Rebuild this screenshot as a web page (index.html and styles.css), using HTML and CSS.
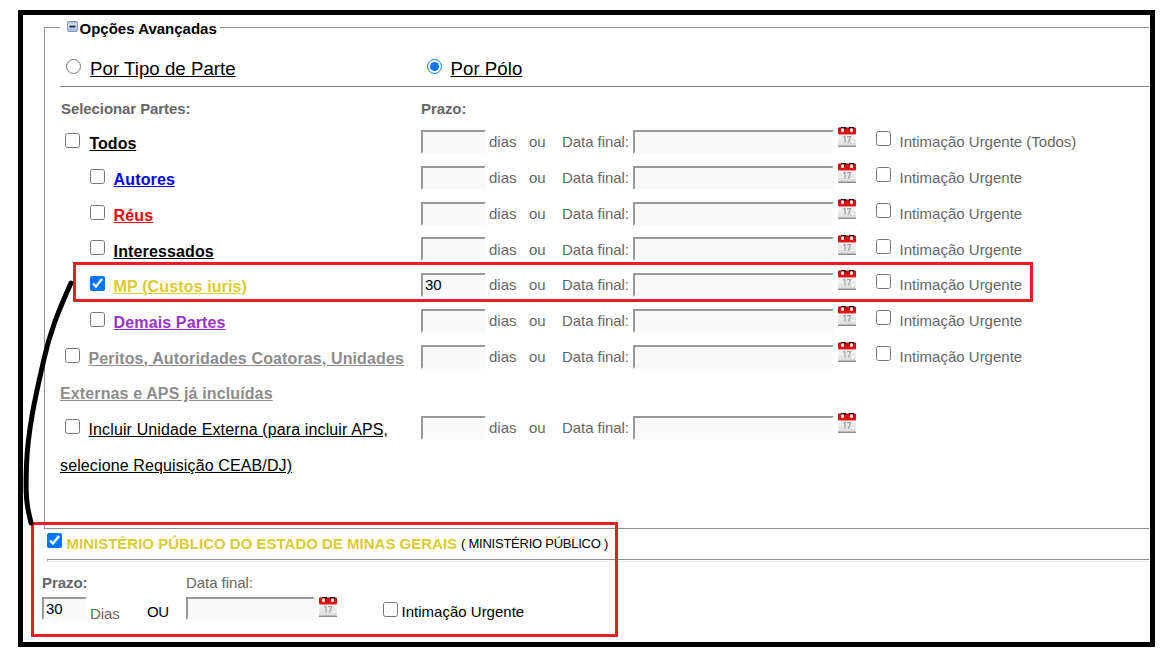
FILE: index.html
```
<!DOCTYPE html>
<html lang="pt-BR">
<head>
<meta charset="utf-8">
<title>Opções Avançadas</title>
<link rel="stylesheet" href="styles.css">
<script src="rows.js" defer></script>
</head>
<body>
<svg width="0" height="0" class="defs">
  <defs>
    <linearGradient id="red" x1="0" y1="0" x2="0" y2="1"><stop offset="0" stop-color="#b80d10"/><stop offset="1" stop-color="#ee1515"/></linearGradient>
    <linearGradient id="page" x1="0" y1="0" x2="0" y2="1"><stop offset="0" stop-color="#fafafa"/><stop offset="1" stop-color="#d8d8d8"/></linearGradient>
    <linearGradient id="toggle" x1="0" y1="0" x2="0" y2="1"><stop offset="0" stop-color="#7d9cc6"/><stop offset="0.25" stop-color="#dce7f5"/><stop offset="1" stop-color="#9db7d8"/></linearGradient>
    <symbol id="calendar" viewBox="0 0 18 20">
      <rect x="0.3" y="6" width="17.4" height="14" fill="url(#page)"/>
      <rect x="0" y="0.500" width="18" height="7" rx="1" fill="url(#red)"/>
      <path d="M3 0h5v1.500h-5zM11 0h5v1.500h-5z" fill="#111"/>
      <rect x="3" y="1.200" width="3" height="3.800" rx="1.200" fill="#f5e4e4"/>
      <rect x="12" y="1.200" width="3" height="3.800" rx="1.200" fill="#f5e4e4"/>
      <path d="M5.300 10.300l1.700-1v6.200M9 9.700h3.600l-2.200 5.800" fill="none" stroke="#a0a0a0" stroke-width="1.200"/>
      <path d="M12.500 15l2.500-2 2 1.500-2 2.500z" fill="#fff" stroke="#ccc" stroke-width=".6"/>
      <path d="M0 19.300h18" stroke="#8c8c8c" stroke-width="1.400"/>
    </symbol>
  </defs>
</svg>
<main class="frame">
  <fieldset class="options">
    <legend><svg class="toggle" viewBox="0 0 11 11"><rect x=".5" y=".5" width="10" height="10" rx="1" fill="url(#toggle)" stroke="#8299bd"/><path d="M2.500 5.500h6" stroke="#26364f" stroke-width="2"/></svg><span>Opções Avançadas</span></legend>
    <div class="modes">
      <label class="mode"><input type="radio" name="mode"><span>Por Tipo de Parte</span></label>
      <label class="mode"><input type="radio" name="mode" checked><span>Por Pólo</span></label>
    </div>
    <div class="heads"><span>Selecionar Partes:</span><span>Prazo:</span></div>
    <div class="rows" id="rows"></div>
  </fieldset>
  <section class="entity">
    <div class="entity-head"><input type="checkbox" checked><b>MINISTÉRIO PÚBLICO DO ESTADO DE MINAS GERAIS</b><span>( MINISTÉRIO PÚBLICO )</span></div>
    <div class="rule"></div>
    <div class="entity-labels"><b>Prazo:</b><span>Data final:</span></div>
    <div class="entity-fields">
      <input class="field days-small" type="text" value="30">
      <span class="unit">Dias</span>
      <span class="or">OU</span>
      <input class="field date-small" type="text">
      <svg class="calendar"><use href="#calendar"/></svg>
      <input class="urgent-check" type="checkbox">
      <span class="urgent-text">Intimação Urgente</span>
    </div>
  </section>
</main>
<div class="mark mark-row"></div>
<div class="mark mark-entity"></div>
<svg class="stroke" viewBox="0 0 100 540" width="100" height="540"><path d="M71 283C58 312 50 332 44 359S28 425 26.500 465S28 508 31 523" fill="none" stroke="#000" stroke-width="5" stroke-linecap="round"/></svg>
</body>
</html>
```
FILE: styles.css
```
body {
  display: flow-root;
  margin: 0;
  background: #fff;
  font: 15px/17px "Liberation Sans", Arial, sans-serif;
  color: #666;
}
.defs { position: absolute; }
.frame {
  display: flow-root;
  box-sizing: border-box;
  width: 1137px;
  height: 637px;
  margin: 10px 0 0 18px;
  border: 5px solid #000;
  padding: 3px 1px 0 0;
}
input[type="checkbox"], input[type="radio"] {
  width: 15px;
  height: 15px;
  margin: 0;
  flex: none;
}
span, b { white-space: nowrap; }
.options {
  box-sizing: border-box;
  height: 511px;
  margin: 0 0 0 21px;
  padding: 0 0 0 15px;
  border: 1px solid #8f8f8f;
  border-right: 0;
  min-width: 0;
}
legend {
  display: flex;
  box-sizing: border-box;
  width: 160px;
  height: 19px;
  padding: 2px 0 0 7px;
  color: #000;
  font-weight: bold;
}
.toggle { width: 11px; height: 11px; margin: 1px 1.500px 0 0; flex: none; }
.modes {
  display: grid;
  grid-template-columns: 360px 1fr;
  box-sizing: border-box;
  height: 50px;
  border-bottom: 1px solid #808080;
  color: #000;
  font-size: 18.67px;
  line-height: 22px;
}
.mode { display: flex; gap: 9px; padding: 21px 0 0 6px; text-decoration: underline; letter-spacing: 0.03px; }
.mode input { margin-top: 1px; }
.mode + .mode { padding-left: 7px; gap: 8.500px; }
.heads {
  display: grid;
  grid-template-columns: 360px 1fr;
  height: 25px;
  padding: 13px 0 0 1px;
  font-weight: bold;
  letter-spacing: -0.080px;
}
.row { display: flex; height: 35.75px; }
.row.tall { height: 71.5px; }
.party { width: 361px; font-size: 16px; line-height: 18px; font-weight: bold; text-decoration: underline; letter-spacing: 0.125px; }
.line { display: flex; padding: 8px 0 0 5px; gap: 9.500px; height: 27.75px; }
.line span { margin-top: 2.3px; }
.line.indent { padding-left: 30px; gap: 8.600px; }
.tall .line { gap: 8.500px; }
.wrap { padding-top: 10.2px; }
.todos { color: #000; letter-spacing: 0; }
.interessados { color: #000; }
.autores { color: #00f; }
.reus { color: #f00; }
.mp { color: #dccb30; }
.demais { color: #9932cc; }
.peritos { color: #8c8c8c; }
.externa { color: #000; font-weight: normal; }
.entries { display: flex; align-items: flex-start; }
.field {
  box-sizing: border-box;
  height: 24px;
  margin: 5px 0 0;
  border: 2px solid;
  border-color: #999 #fbfbfb #fbfbfb #999;
  padding: 0 2px 2px;
  background: #f9f9f9;
  color: #000;
  font: 15px "Liberation Sans", Arial, sans-serif;
}
.days { width: 65px; }
.date { width: 201px; }
.entries span { margin-top: 8.3px; }
.entries .unit { width: 40px; margin-left: 3px; }
.entries .or { width: 33px; }
.entries .final { width: 71px; letter-spacing: -0.050px; }
.calendar { width: 18px; height: 20px; margin: 2.3px 0 0 4px; flex: none; }
.entries input[type="checkbox"] { margin: 6.3px 8.600px 0 20px; }
.entity { height: 113px; }
.entity-head { display: flex; height: 30px; padding-left: 24px; }
.entity-head input { margin-top: 4px; }
.entity-head b { margin: 6px 0 0 4.500px; color: #dccb30; }
.entity-head span { margin: 6px 0 0 4px; color: #000; font-size: 13px; letter-spacing: -0.25px; }
.rule { height: 1px; margin-left: 24px; border-top: 1px solid #8f8f8f; border-bottom: 1px solid #eee; border-left: 1px solid #aaa; }
.entity-labels { display: grid; grid-template-columns: 144px 1fr; padding: 12px 0 0 19px; height: 23px; letter-spacing: -0.050px; }
.entity-fields { display: flex; align-items: flex-start; padding-left: 19px; }
.entity-fields .field { margin: 0; height: 23px; padding-bottom: 1px; }
.days-small { width: 45px; }
.date-small { width: 129px; }
.entity-fields .unit { width: 57px; margin: 8px 0 0 3px; letter-spacing: -0.100px; }
.entity-fields .or { width: 39px; margin-top: 6px; color: #000; letter-spacing: -0.300px; }
.entity-fields .calendar { margin: 0 0 0 4px; }
.entity-fields .urgent-check { margin: 5px 3.600px 0 46px; }
.urgent-text { margin-top: 6px; color: #000; }
.mark { position: absolute; box-sizing: border-box; border: 3px solid #ed1c24; }
.mark-row { left: 73px; top: 262px; width: 960px; height: 40px; }
.mark-entity { left: 31px; top: 522px; width: 587px; height: 115px; }
.stroke { position: absolute; left: 0; top: 0; }
```
FILE: rows.js
```
const parties = [
  { kind: "todos", text: "Todos", urgent: "Intimação Urgente (Todos)" },
  { kind: "autores", text: "Autores", indent: true, urgent: "Intimação Urgente" },
  { kind: "reus", text: "Réus", indent: true, urgent: "Intimação Urgente" },
  { kind: "interessados", text: "Interessados", indent: true, urgent: "Intimação Urgente" },
  { kind: "mp", text: "MP (Custos iuris)", indent: true, checked: true, days: "30", urgent: "Intimação Urgente" },
  { kind: "demais", text: "Demais Partes", indent: true, urgent: "Intimação Urgente" },
  { kind: "peritos", text: "Peritos, Autoridades Coatoras, Unidades", wrap: "Externas e APS já incluídas", urgent: "Intimação Urgente" },
  { kind: "externa", text: "Incluir Unidade Externa (para incluir APS,", wrap: "selecione Requisição CEAB/DJ)" }
];

document.getElementById("rows").innerHTML = parties.map(p => `
  <div class="row ${p.wrap ? "tall" : ""}">
    <div class="party ${p.kind}">
      <label class="line ${p.indent ? "indent" : ""}"><input type="checkbox" ${p.checked ? "checked" : ""}><span>${p.text}</span></label>
      ${p.wrap ? `<div class="wrap"><span>${p.wrap}</span></div>` : ""}
    </div>
    <div class="entries">
      <input class="field days" type="text" value="${p.days || ""}">
      <span class="unit">dias</span><span class="or">ou</span><span class="final">Data final:</span>
      <input class="field date" type="text">
      <svg class="calendar"><use href="#calendar"/></svg>
      ${p.urgent ? `<input type="checkbox"><span>${p.urgent}</span>` : ""}
    </div>
  </div>`).join("");
```
